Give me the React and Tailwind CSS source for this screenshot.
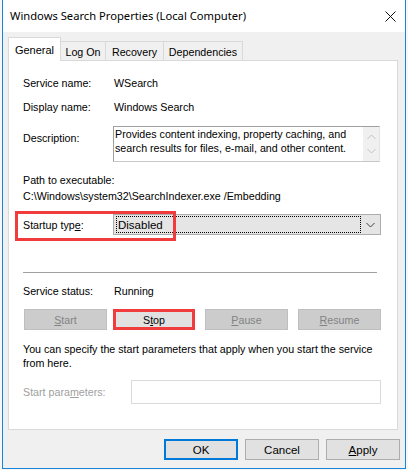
import React from "react";

const sans = { fontFamily: '"Liberation Sans", Arial, sans-serif' };

function Btn({ children, disabled, className = "" }) {
  return (
    <div
      className={`h-[21px] w-[83px] flex items-center justify-center border ${
        disabled
          ? "bg-[#cccccc] border-[#bfbfbf] text-[#838383]"
          : "bg-[#e1e1e1] border-[#adadad] text-black"
      } ${className}`}
    >
      {children}
    </div>
  );
}

function Tab({ label, active, width }) {
  if (active)
    return (
      <div className={`relative z-10 -mb-px h-[24px] ${width} flex items-center justify-center bg-white border border-b-0 border-[#d9d9d9] text-[11px]`}>
        {label}
      </div>
    );
  return (
    <div className={`mt-[4px] h-[19px] -ml-px ${width} flex items-center justify-center bg-[#f0f0f0] border border-b-0 border-[#d9d9d9] pt-[1px] text-[10.7px]`}>
      {label}
    </div>
  );
}

export default function App() {
  return (
    <div className="w-[408px] h-[470px] bg-[#f7f7f7] text-black text-[10.7px] leading-[16px]" style={sans}>
      <div className="ml-[2px] w-[404px] h-[469px] flex flex-col bg-[#f0f0f0] border-x border-b border-[#1883d7]">
        {/* title bar */}
        <div className="h-[32px] bg-white flex items-center justify-between pl-[7px] pr-[9px]">
          <span className="text-[11.2px] text-black" style={{ fontFamily: '"Noto Sans", "Open Sans", sans-serif' }}>
            Windows Search Properties (Local Computer)
          </span>
          <svg width="11" height="11" viewBox="0 0 11 11">
            <path d="M0.5 0.5 L10.5 10.5 M10.5 0.5 L0.5 10.5" stroke="#111" strokeWidth="1" fill="none" />
          </svg>
        </div>

        {/* tabs */}
        <div className="pt-[5px] pl-[5px] flex">
          <Tab label="General" active width="w-[53px]" />
          <Tab label="Log On" width="w-[46px]" />
          <Tab label="Recovery" width="w-[59px]" />
          <Tab label="Dependencies" width="w-[80px]" />
        </div>

        {/* panel */}
        <div className="ml-[5px] w-[390px] h-[370px] bg-white border border-[#d9d9d9] pl-[14px] pt-[14px]">
          <div className="flex h-[16px] items-center">
            <div className="w-[91px]">Service name:</div>
            <div>WSearch</div>
          </div>
          <div className="flex h-[16px] items-center mt-[8px]">
            <div className="w-[91px]">Display name:</div>
            <div>Windows Search</div>
          </div>
          <div className="flex mt-[11px]">
            <div className="w-[90px] pt-[4px]">Description:</div>
            <div className="w-[267px] h-[36px] flex border border-[#a0a0a0] border-r-[#e3e3e3] border-b-[#c8c8c8]">
              <div className="flex-1 pl-[1px] leading-[14px]">
                Provides content indexing, property caching, and search results for files, e-mail, and other content.
              </div>
              <div className="w-[16px] bg-[#f0f0f0] flex flex-col items-center justify-around py-[3px]">
                <svg width="9" height="6" viewBox="0 0 9 6">
                  <path d="M0.5 5 L4.5 1 L8.5 5" stroke="#c2c2c2" fill="none" />
                </svg>
                <svg width="9" height="6" viewBox="0 0 9 6">
                  <path d="M0.5 1 L4.5 5 L8.5 1" stroke="#c2c2c2" fill="none" />
                </svg>
              </div>
            </div>
          </div>
          <div className="mt-[10px]">Path to executable:</div>
          <div>C:\Windows\system32\SearchIndexer.exe /Embedding</div>

          <div className="relative flex items-center mt-[10px] h-[21px]">
            <div className="w-[90px]">
              Startup typ<u>e</u>:
            </div>
            <div className="w-[268px] h-[21px] flex items-center bg-[#e5e5e5] border border-[#adadad] pl-[2px]">
              <div className="flex-1 h-[17px] flex items-center border border-dotted border-black pl-[1px] text-[11.5px]">
                Disabled
              </div>
              <div className="w-[19px] flex justify-center">
                <svg width="9" height="6" viewBox="0 0 9 6">
                  <path d="M0.5 1 L4.5 5 L8.5 1" stroke="#404040" fill="none" />
                </svg>
              </div>
            </div>
            <div className="absolute -left-[8px] -top-[3px] w-[161px] h-[30px] border-[3px] border-[#f03c3c]" />
          </div>

          <div className="mt-[37px] w-[354px] h-px bg-[#a0a0a0]" />

          <div className="flex h-[16px] items-center mt-[10px]">
            <div className="w-[91px]">Service status:</div>
            <div>Running</div>
          </div>

          <div className="flex mt-[10px] h-[21px]">
            <Btn disabled className="ml-[1px]">
              <u>S</u>tart
            </Btn>
            <div className="ml-[6px] w-[82px] h-[21px] flex items-center justify-center bg-[#e1e1e1] border-[3px] border-[#f03c3c]">
              S<u>t</u>op
            </div>
            <Btn disabled className="ml-[10px]">
              <u>P</u>ause
            </Btn>
            <Btn disabled className="ml-[10px]">
              <u>R</u>esume
            </Btn>
          </div>

          <div className="mt-[12px] leading-[14px] w-[350px]">
            You can specify the start parameters that apply when you start the service from here.
          </div>

          <div className="flex items-center mt-[10px]">
            <div className="w-[108px] text-[#a0a0a0]">
              Start para<u>m</u>eters:
            </div>
            <div className="w-[250px] h-[24px] border border-[#d9d9d9] bg-white" />
          </div>
        </div>

        {/* dialog buttons */}
        <div className="flex justify-end gap-[7px] pr-[5px] mt-[9px]">
          <div className="w-[74px] h-[21px] flex items-center justify-center bg-[#e1e1e1] border-2 border-[#0078d7] text-[11.5px]">
            OK
          </div>
          <div className="w-[74px] h-[21px] flex items-center justify-center bg-[#e1e1e1] border border-[#adadad] text-[11.5px]">
            Cancel
          </div>
          <div className="w-[74px] h-[21px] flex items-center justify-center bg-[#e1e1e1] border border-[#adadad] text-[11.5px]">
            <u>A</u>pply
          </div>
        </div>
      </div>
    </div>
  );
}
